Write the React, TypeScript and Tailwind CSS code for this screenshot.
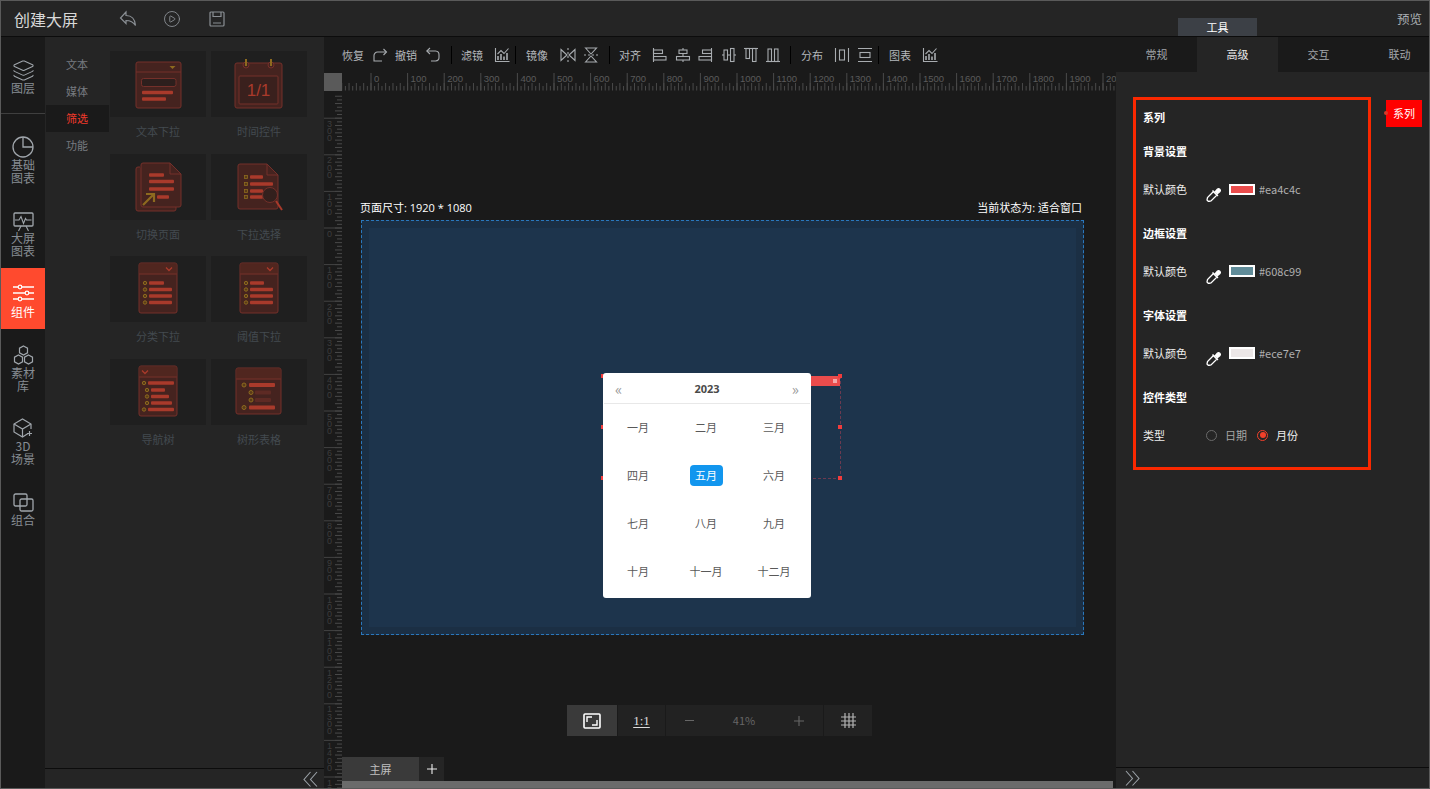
import React from "react";
import { Layers, CirclePlay } from "lucide-react";

const LINE = "#74302a";
const FILL = "#45231f";
const BAR = "#a93a2b";
const DIM = "#5e2a24";
const GOLD = "#8d6a1f";

function Bar({ x1, x2, y, h = 3.4, c = BAR }: { x1: number; x2: number; y: number; h?: number; c?: string }) {
  return <rect x={x1} y={y - h / 2} width={x2 - x1} height={h} rx={1} fill={c} />;
}
function Dot({ x, y, r = 1.7 }: { x: number; y: number; r?: number }) {
  return <circle cx={x} cy={y} r={r} fill="#5a3a18" stroke={GOLD} strokeWidth={1} />;
}
function Chev({ x, y }: { x: number; y: number }) {
  return <path d={`M${x - 3} ${y - 1.5}L${x} ${y + 1.5}L${x + 3} ${y - 1.5}`} fill="none" stroke={BAR} strokeWidth={1.3} />;
}
function Ico({ children }: { children: React.ReactNode }) {
  return (
    <svg width="96" height="66" viewBox="0 0 96 66" className="block">
      {children}
    </svg>
  );
}
function ListBox({ chevX, y1 = 7, y2 = 57, x1 = 29, x2 = 67, head = 18, chevron = true, children }: { chevX: number; y1?: number; y2?: number; x1?: number; x2?: number; head?: number; chevron?: boolean; children: React.ReactNode }) {
  return (
    <Ico>
      <rect x={x1} y={y1} width={x2 - x1} height={y2 - y1} rx={2} fill={FILL} stroke={LINE} strokeWidth={1} />
      <rect x={x1 + 0.5} y={y1 + 0.5} width={x2 - x1 - 1} height={head - y1} fill="#50261f" />
      <line x1={x1} x2={x2} y1={head} y2={head} stroke={LINE} />
      {chevron && <Chev x={chevX} y={(y1 + head) / 2 + 0.5} />}
      {children}
    </Ico>
  );
}

const icons: Record<string, React.ReactNode> = {
  文本下拉: (
    <Ico>
      <rect x="26" y="11" width="45" height="46" rx="2" fill={FILL} stroke={LINE} />
      <line x1="26" x2="71" y1="21" y2="21" stroke={LINE} />
      <path d="M59.5 15h6l-3 3z" fill={GOLD} />
      <rect x="31.5" y="27.5" width="34.5" height="8" rx="2" fill="#2d1f1d" stroke={LINE} />
      <Bar x1={32} x2={63} y={41.5} />
      <Bar x1={32} x2={56} y={48} />
    </Ico>
  ),
  时间控件: (
    <Ico>
      <rect x="24" y="12" width="47" height="45" rx="2" fill={FILL} stroke={LINE} />
      <rect x="28" y="25" width="39" height="28" rx="1" fill="#3a201d" stroke={LINE} />
      <circle cx="35" cy="14" r="3" fill={FILL} stroke={LINE} />
      <circle cx="60" cy="14" r="3" fill={FILL} stroke={LINE} />
      <line x1="35" x2="35" y1="8" y2="15" stroke={GOLD} strokeWidth="2" />
      <line x1="60" x2="60" y1="8" y2="15" stroke={GOLD} strokeWidth="2" />
      <text x="47.5" y="45" fill={BAR} fontSize="17" textAnchor="middle" fontFamily="Liberation Sans, sans-serif">1/1</text>
    </Ico>
  ),
  切换页面: (
    <Ico>
      <path d="M30 13h-2a2 2 0 0 0-2 2v40a2 2 0 0 0 2 2h36a2 2 0 0 0 2-2v-2" fill={FILL} stroke={LINE} />
      <path d="M33 9h27l11 11v31a2 2 0 0 1-2 2H33a2 2 0 0 1-2-2V11a2 2 0 0 1 2-2z" fill={FILL} stroke={LINE} />
      <path d="M60 9v11h11" fill="none" stroke={LINE} />
      <Bar x1={39} x2={54} y={21} />
      <Bar x1={39} x2={64} y={27.5} />
      <Bar x1={39} x2={64} y={35} />
      <Bar x1={47} x2={59} y={43} />
      <path d="M33 51L44 40M36 40h8v8" fill="none" stroke={GOLD} strokeWidth="2.2" />
    </Ico>
  ),
  下拉选择: (
    <Ico>
      <path d="M29 10h27l11 11v32a2 2 0 0 1-2 2H29a2 2 0 0 1-2-2V12a2 2 0 0 1 2-2z" fill={FILL} stroke={LINE} />
      <path d="M56 10v11h11" fill="none" stroke={LINE} />
      {[23, 30, 37, 43].map((y) => (
        <rect key={y} x="33.5" y={y - 1.5} width="3" height="3" fill="#5a3a18" stroke={GOLD} strokeWidth=".8" />
      ))}
      <Bar x1={39} x2={52} y={23} />
      <Bar x1={39} x2={62} y={30} />
      <Bar x1={39} x2={52} y={37} />
      <Bar x1={39} x2={52} y={43} />
      <circle cx="59" cy="41" r="7.5" fill="#33201d" stroke={LINE} />
      <line x1="65" x2="71" y1="47" y2="56" stroke={BAR} strokeWidth="2" />
    </Ico>
  ),
  分类下拉: (
    <ListBox chevX={59}>
      <Dot x={35} y={27} /><Bar x1={39} x2={54} y={27} />
      <Dot x={35} y={33.5} /><Bar x1={39} x2={62} y={33.5} />
      <Dot x={35} y={40} /><Bar x1={39} x2={62} y={40} />
      <Dot x={35} y={46.5} /><Bar x1={39} x2={62} y={46.5} />
    </ListBox>
  ),
  阈值下拉: (
    <ListBox chevX={59}>
      <Dot x={35} y={27} /><Bar x1={39} x2={53} y={27} />
      <Dot x={35} y={33.5} /><Bar x1={39} x2={62} y={33.5} />
      <Dot x={35} y={40} /><Bar x1={39} x2={62} y={40} />
      <Dot x={35} y={46.5} /><Bar x1={39} x2={62} y={46.5} />
    </ListBox>
  ),
  导航树: (
    <ListBox chevX={35} head={18}>
      <Dot x={34} y={24} /><Bar x1={38} x2={64} y={24} />
      <Dot x={37} y={31} /><Bar x1={41} x2={55} y={31} />
      <Dot x={37} y={37.5} /><Bar x1={41} x2={59} y={37.5} />
      <Dot x={37} y={44} /><Bar x1={41} x2={62} y={44} />
      <Dot x={34} y={50.5} /><Bar x1={38} x2={64} y={50.5} />
    </ListBox>
  ),
  树形表格: (
    <ListBox chevX={0} x1={25} x2={70} y1={9} y2={55} head={20} chevron={false}>
      <Dot x={33} y={26} r={2} /><Bar x1={38} x2={64} y={26} h={4} />
      <Dot x={40} y={33.5} r={2} /><Bar x1={44} x2={60} y={33.5} h={4} c={DIM} />
      <Dot x={40} y={41} r={2} /><Bar x1={44} x2={60} y={41} h={4} c={DIM} />
      <Dot x={33} y={48.5} r={2} /><Bar x1={38} x2={64} y={48.5} h={4} />
    </ListBox>
  ),
};

function S({ children, w = 16, h = 16, className = "" }: { children: React.ReactNode; w?: number; h?: number; className?: string }) {
  return (
    <svg width={w} height={h} viewBox={`0 0 ${w} ${h}`} fill="none" stroke="currentColor" strokeWidth="1.1" className={`block shrink-0 ${className}`}>
      {children}
    </svg>
  );
}

const Chart = () => (
  <S>
    <path d="M1.5 1v13.5H15.5" />
    <path d="M4 13V9M7 13V7M10 13V9.5M13 13V6" strokeWidth="1.6" />
    <path d="M3.5 7L7 3.5L10 6.5L14.5 1.5" />
  </S>
);

function Item({ t, ml }: { t: string; ml: string }) {
  return <span className={`text-[11px] leading-[14px] whitespace-nowrap text-[#b4b8bc] ${ml}`}>{t}</span>;
}
const Div = ({ ml }: { ml: string }) => <span className={`w-px h-[18px] bg-black shrink-0 ${ml}`} />;

function Toolbar() {
  return (
    <div className="h-[35px] bg-[#1a1a1a] flex items-center text-[#a8acb0] pl-[18px] shrink-0">
      <Item t="恢复" ml="" />
      <S className="ml-[8px]"><path d="M14 5H5.5a3.5 3.5 0 0 0-3.5 3.5V14h8" /><path d="M11.5 2L14.5 5L11.5 8" /></S>
      <Item t="撤销" ml="ml-[7px]" />
      <S className="ml-[8px]"><path d="M2 4h8.5a3.8 3.8 0 0 1 3.5 4v2a3.8 3.8 0 0 1-3.5 4H6" /><path d="M5 1L1.8 4L5 7" /></S>
      <Div ml="ml-[10px]" />
      <Item t="滤镜" ml="ml-[9px]" />
      <span className="ml-[11px]"><Chart /></span>
      <Div ml="ml-[5px]" />
      <Item t="镜像" ml="ml-[10px]" />
      <S className="ml-[12px]"><path d="M1 2.5L7 8L1 13.5zM15 2.5L9 8L15 13.5z" /><path d="M8 1v14" strokeDasharray="2 2" /></S>
      <S className="ml-[7px]"><path d="M2.5 1L8 7L13.5 1zM2.5 15L8 9L13.5 15z" /><path d="M1 8h14" strokeDasharray="2 2" /></S>
      <Div ml="ml-[10px]" />
      <Item t="对齐" ml="ml-[9px]" />
      <S className="ml-[11px]"><path d="M1.5 1v14" /><rect x="1.5" y="3" width="9" height="3.5" /><rect x="1.5" y="9.5" width="12.5" height="3.5" /></S>
      <S className="ml-[7px]"><path d="M8 1v14" /><rect x="4" y="3" width="8" height="3.5" fill="#1a1a1a" /><rect x="1.5" y="9.5" width="13" height="3.5" fill="#1a1a1a" /></S>
      <S className="ml-[6px]"><path d="M14.5 1v14" /><rect x="5.5" y="3" width="9" height="3.5" /><rect x="2" y="9.5" width="12.5" height="3.5" /></S>
      <S className="ml-[8px]"><path d="M1 8h14" /><rect x="3" y="3" width="3.5" height="10" fill="#1a1a1a" /><rect x="9.5" y="1.5" width="3.5" height="13" fill="#1a1a1a" /></S>
      <S className="ml-[6px]"><path d="M1 1.5h14" /><rect x="3" y="1.5" width="3.5" height="10" /><rect x="9.5" y="1.5" width="3.5" height="13" /></S>
      <S className="ml-[6px]"><path d="M1 14.5h14" /><rect x="3" y="2" width="3.5" height="12.5" /><rect x="9.5" y="2" width="3.5" height="12.5" /></S>
      <Div ml="ml-[9px]" />
      <Item t="分布" ml="ml-[10px]" />
      <S className="ml-[11px]"><path d="M1.5 1v14M14.5 1v14" /><rect x="5.5" y="3" width="5" height="10" /></S>
      <S className="ml-[7px]"><path d="M1 1.5h14M1 14.5h14" /><rect x="3" y="5.5" width="10" height="5" /></S>
      <Div ml="ml-[5px]" />
      <Item t="图表" ml="ml-[10px]" />
      <span className="ml-[11px]"><Chart /></span>
    </div>
  );
}

function HRuler() {
  const w = 774;
  const o = 29;
  const step = 3.66;
  const ticks: React.ReactNode[] = [];
  for (let i = -8; i * step + o < w; i++) {
    const x = o + i * step;
    ticks.push(<line key={i} x1={x} x2={x} y1={i % 2 === 0 ? 11 : 14} y2={18.5} stroke="#4a4a4a" />);
  }
  const labels: React.ReactNode[] = [];
  for (let k = 0; k <= 20; k++) {
    const x = o + k * 36.6;
    labels.push(
      <g key={k}>
        <line x1={x} x2={x} y1={1} y2={18.5} stroke="#4a4a4a" />
        <text x={x + 3} y={10} fontSize="9.5" fill="#5b5b5b" fontFamily="Liberation Sans, sans-serif">{k * 100}</text>
      </g>
    );
  }
  return (
    <svg width={w} height={19} className="block shrink-0">
      {ticks}
      {labels}
    </svg>
  );
}

function VRuler() {
  const h = 698;
  const o = 137; // y of 0 inside the ruler (228 - 91)
  const step = 3.66;
  const ticks: React.ReactNode[] = [];
  for (let i = -36; i * step + o < h; i++) {
    const y = o + i * step;
    ticks.push(<line key={i} x1={i % 2 === 0 ? 11 : 13} x2={18} y1={y} y2={y} stroke="#4a4a4a" />);
  }
  const labels: React.ReactNode[] = [];
  for (let k = -3; k <= 16; k++) {
    const y = o + k * 36.6;
    const digits = String(Math.abs(k) * 100).split("");
    labels.push(
      <g key={k}>
        <line x1={0} x2={18} y1={y} y2={y} stroke="#444" />
        {digits.map((d, i) => (
          <text key={i} x={3} y={y + 8.5 + i * 7.3} fontSize="9" fill="#3d3d3d" fontFamily="Liberation Sans, sans-serif">{d}</text>
        ))}
      </g>
    );
  }
  return (
    <svg width={18} height={h} className="block shrink-0">
      {ticks}
      {labels}
    </svg>
  );
}

function RailItem({ label, icon, box, active = false, textTop = "" }: { label: string[]; icon: React.ReactNode; box: string; active?: boolean; textTop?: string }) {
  return (
    <div className={`flex flex-col items-center shrink-0 ${box} ${active ? "bg-[#ff4a2e] text-white" : "text-[#868c92] [&_svg]:text-[#a0a6ac]"}`}>
      {icon}
      <div className={`text-[12px] leading-[13px] text-center ${textTop}`}>
        {label.map((l) => (
          <div key={l}>{l}</div>
        ))}
      </div>
    </div>
  );
}

function Rail() {
  return (
    <div className="w-[44px] bg-[#1a1a1a] flex flex-col shrink-0">
      <RailItem
        label={["图层"]}
        box="h-[77px] pt-[22px] border-b border-[#3f3f3f]"
        textTop="-mt-px"
        icon={<Layers size={23} strokeWidth={1.1} />}
      />
      <RailItem
        label={["基础", "图表"]}
        box="h-[76px] pt-[22px]"
        icon={
          <S w={22} h={22}>
            <circle cx="11" cy="11" r="10" strokeWidth="1.3" />
            <path d="M11 1v10h10" strokeWidth="1.3" />
          </S>
        }
      />
      <RailItem
        label={["大屏", "图表"]}
        box="h-[78px] pt-[22px]"
        textTop="-mt-px"
        icon={
          <S w={21} h={20}>
            <rect x="1" y="1" width="19" height="13" rx="1" strokeWidth="1.3" />
            <path d="M2 8h4l2-3.5 2.5 7 2-5 1 1.5h5" />
            <path d="M8 14l-2.500 5M13 14l2.500 5" />
          </S>
        }
      />
      <RailItem
        label={["组件"]}
        active
        box="h-[61px] pt-[16px]"
        textTop="mt-[3px]"
        icon={
          <S w={21} h={18}>
            <path d="M0 3h21M0 9h21M0 15h21" strokeWidth="1.3" />
            <circle cx="7" cy="3" r="1.8" fill="#ff4a2e" strokeWidth="1.2" />
            <circle cx="14" cy="9" r="1.8" fill="#ff4a2e" strokeWidth="1.2" />
            <circle cx="7" cy="15" r="1.8" fill="#ff4a2e" strokeWidth="1.2" />
          </S>
        }
      />
      <RailItem
        label={["素材", "库"]}
        box="h-[75px] pt-[16px]"
        textTop="mt-[1px]"
        icon={
          <S w={21} h={20}>
            <path d="M10.5 1l4 2.200v4.600l-4 2.200-4-2.200V3.200z" strokeWidth="1.2" />
            <path d="M5.500 10l4 2.200v4.600l-4 2.200-4-2.200v-4.600z" strokeWidth="1.2" />
            <path d="M15.500 10l4 2.200v4.600l-4 2.200-4-2.200v-4.600z" strokeWidth="1.2" />
          </S>
        }
      />
      <RailItem
        label={["3D", "场景"]}
        box="h-[75px] pt-[14px]"
        textTop="mt-[1px]"
        icon={
          <S w={20} h={20}>
            <path d="M15 15.500L9.500 19 1 14V6l8.500-5L18 6v5" strokeWidth="1.2" />
            <path d="M1 6l8.500 5L18 6M9.500 11v8" strokeWidth="1.2" />
            <path d="M16.500 13v5M14 15.500h5" strokeWidth="1.2" />
          </S>
        }
      />
      <RailItem
        label={["组合"]}
        box="pt-[14px]"
        textTop="mt-[1px]"
        icon={
          <S w={21} h={19}>
            <rect x="1" y="1" width="13" height="12" rx="1.500" strokeWidth="1.3" />
            <rect x="7" y="6" width="13" height="12" rx="1.500" strokeWidth="1.3" />
          </S>
        }
      />
    </div>
  );
}

function LeftPanel() {
  const subs = ["文本", "媒体", "筛选", "功能"];
  const names = Object.keys(icons);
  return (
    <div className="w-[279px] shrink-0 flex flex-col bg-[#252525]">
      <div className="flex flex-1 min-h-0">
        <div className="w-[65px] shrink-0 pt-[14px]">
          {subs.map((s) => (
            <div
              key={s}
              className={`h-[27px] mx-px pl-[20px] flex items-center text-[11px] ${s === "筛选" ? "bg-[#1a1a1a] text-[#f0392b]" : "text-[#777b80]"}`}
            >
              {s}
            </div>
          ))}
        </div>
        <div className="pt-[14px] grid grid-cols-[96px_96px] gap-x-[5px] content-start">
          {names.map((n) => (
            <div key={n} className="flex flex-col items-center">
              <div className="w-[96px] h-[66px] bg-[#1f1f1f]">{icons[n]}</div>
              <div className="pt-[7px] pb-[15.5px] text-[11px] leading-[14px] text-[#434a50]">{n}</div>
            </div>
          ))}
        </div>
      </div>
      <div className="h-[20px] border-t border-[#0c0c0c] flex justify-end items-center pr-[6px] text-[#9aa0a6] shrink-0">
        <S w={15} h={16}><path d="M7.500 1L1 8.500l6.500 7M14 1L7.500 8.500l6.500 7" /></S>
      </div>
    </div>
  );
}

function Handle({ pos }: { pos: string }) {
  return <span className={`absolute w-[4px] h-[4px] bg-[#f23c3c] ${pos}`} />;
}

function Calendar() {
  const months = ["一月", "二月", "三月", "四月", "五月", "六月", "七月", "八月", "九月", "十月", "十一月", "十二月"];
  return (
    <div className="absolute left-[234px] top-[145px] w-[208px] h-[225px] bg-white rounded-[3px] flex flex-col">
      <div className="h-[31px] pt-[2px] mx-px border-b border-[#e8e8e8] flex items-center justify-between px-[11px] text-[#999] text-[15px]">
        <span>«</span>
        <span className="text-[11px] font-bold text-[#4a4a4a] font-['Open_Sans',sans-serif]">2023</span>
        <span>»</span>
      </div>
      <div className="grid grid-cols-[68px_68px_68px] auto-rows-[48px] pl-px -mt-px">
        {months.map((m) => (
          <div key={m} className="flex items-center justify-center text-[11px] text-[#595959]">
            {m === "五月" ? (
              <span className="w-[33px] h-[21px] rounded-[4px] bg-[#1296ee] text-white flex items-center justify-center">{m}</span>
            ) : (
              m
            )}
          </div>
        ))}
      </div>
    </div>
  );
}

function Center() {
  return (
    <div className="w-[792px] shrink-0 flex flex-col bg-[#1a1a1a]">
      <Toolbar />
      <div className="h-[19px] flex shrink-0">
        <div className="w-[18px] h-[18px] mt-px bg-[#5a5a5a] shrink-0" />
        <HRuler />
      </div>
      <div className="flex flex-1 min-h-0 overflow-hidden">
        <VRuler />
        <div className="flex-1 flex flex-col min-w-0">
          <div className="pl-[19px] pt-[110px] w-[742px]">
            <div className="h-[19px] flex justify-between text-[11px] leading-[14px] text-white pr-[2px] font-['Open_Sans','Noto_Sans_CJK_SC',sans-serif]">
              <span className="-ml-px">页面尺寸: 1920 * 1080</span>
              <span>当前状态为: 适合窗口</span>
            </div>
            <div className="w-[723px] h-[415px] border border-dashed border-[#2a78bd] bg-[#1b2f44] p-[7px] flex">
              <div className="flex-1 bg-[#1d344c] relative">
                <div className="absolute left-[234px] top-[148px] w-[238px] h-[103px] border-r border-b border-dashed border-[#6d3a50]">
                  <div className="h-[10px] bg-[#ea4c4c] flex justify-end items-center pr-[3px]">
                    <span className="w-[4px] h-[4px] bg-[#f3a9a9]" />
                  </div>
                  <Handle pos="-left-[2px] -top-[2px]" />
                  <Handle pos="-right-[2px] -top-[2px]" />
                  <Handle pos="-left-[2px] top-[49px]" />
                  <Handle pos="-right-[2px] top-[49px]" />
                  <Handle pos="-left-[2px] -bottom-[2px]" />
                  <Handle pos="-right-[2px] -bottom-[2px]" />
                </div>
                <Calendar />
              </div>
            </div>
          </div>
          <div className="mt-[70px] ml-[225px] h-[31px] flex gap-px text-[#666] shrink-0">
            <div className="w-[50px] bg-[#3a3a3a] flex items-center justify-center text-white">
              <S w={18} h={16}>
                <rect x="1" y="1" width="16" height="14" rx="1" strokeWidth="1.6" />
                <path d="M4 9V4h5M14 7v5H9" strokeWidth="1.4" />
              </S>
            </div>
            <div className="w-[47px] bg-[#222] flex items-center justify-center text-[13px] text-[#ddd] underline underline-offset-2 font-['Liberation_Serif',serif]">1:1</div>
            <div className="w-[157px] bg-[#222] flex items-center justify-between px-[19px] text-[11px]">
              <span className="w-[9px] h-px bg-[#666]" />
              <span>41%</span>
              <S w={10} h={10}><path d="M5 0v10M0 5h10" /></S>
            </div>
            <div className="w-[48px] bg-[#222] flex items-center justify-center text-[#b5b5b5]">
              <S w={15} h={15}>
                <path d="M4 0v15M8 0v15M12 0v15M0 4h15M0 8h15M0 12h15" strokeWidth="1.2" />
              </S>
            </div>
          </div>
          <div className="mt-[21px] h-[24px] flex shrink-0">
            <div className="w-[77px] bg-[#3a3a3a] flex items-center justify-center text-[11px] text-[#c0c0c0]">主屏</div>
            <div className="w-[25px] bg-[#252525] flex items-center justify-center text-[#eee]">
              <S w={10} h={10}><path d="M5 0v10M0 5h10" /></S>
            </div>
          </div>
          <div className="h-[7px] w-[771px] bg-[#6b6b6b] shrink-0" />
        </div>
      </div>
    </div>
  );
}

function Head({ t, mt }: { t: string; mt: string }) {
  return <div className={`h-[16px] leading-[16px] text-[11px] font-bold text-white ${mt}`}>{t}</div>;
}

function Dropper() {
  return (
    <S w={15} h={15} className="text-white mt-[10px]">
      <path d="M2.500 14.500L1 13l.500-2.500L7.500 4.500l3.500 3.500-6 6z" strokeWidth="1.3" />
      <path d="M6.500 3.500l5.500 5.500" strokeWidth="1.3" />
      <path d="M9 5l2.500-3a1.800 1.800 0 0 1 2.500 2.500L11 7" strokeWidth="1.3" fill="#fff" />
    </S>
  );
}

function ColorRow({ mt, color, hex, swatchH }: { mt: string; color: string; hex: string; swatchH: string }) {
  return (
    <div className={`h-[16px] flex items-center text-[11px] ${mt}`}>
      <span className="w-[63px] text-[#eee] shrink-0">默认颜色</span>
      <Dropper />
      <span className={`w-[26px] border-2 border-white ml-[8px] ${swatchH} ${color}`} />
      <span className="ml-[4px] text-[#b0b0b0]">{hex}</span>
    </div>
  );
}

function RightPanel() {
  const tabs = ["常规", "高级", "交互", "联动"];
  return (
    <div className="w-[313px] shrink-0 bg-[#252525] flex flex-col overflow-hidden">
      <div className="h-[35px] bg-[#1a1a1a] flex shrink-0">
        {tabs.map((t) => (
          <div
            key={t}
            className={`w-[81px] shrink-0 flex items-center justify-center text-[11px] ${t === "高级" ? "bg-[#252525] text-[#e8e8e8]" : "text-[#a3a7ab]"}`}
          >
            {t}
          </div>
        ))}
      </div>
      <div className="flex-1 min-h-0 flex items-start pl-[17px] pt-[25px] relative">
        <div className="w-[238px] h-[373px] border-[3px] border-[#fa2800] pl-[7px] pt-[9px] shrink-0">
          <Head t="系列" mt="" />
          <Head t="背景设置" mt="mt-[18px]" />
          <ColorRow mt="mt-[22px]" color="bg-[#ea4c4c]" hex="#ea4c4c" swatchH="h-[11px]" />
          <Head t="边框设置" mt="mt-[28px]" />
          <ColorRow mt="mt-[22px]" color="bg-[#608c99]" hex="#608c99" swatchH="h-[12px]" />
          <Head t="字体设置" mt="mt-[28px]" />
          <ColorRow mt="mt-[22px]" color="bg-[#ece7e7]" hex="#ece7e7" swatchH="h-[12px]" />
          <Head t="控件类型" mt="mt-[28px]" />
          <div className="h-[16px] mt-[22px] flex items-center text-[11px]">
            <span className="w-[63px] text-[#eee] shrink-0">类型</span>
            <span className="w-[11px] h-[11px] rounded-full border border-[#6a6a6a] shrink-0" />
            <span className="ml-[8px] text-[#a6a6a6]">日期</span>
            <span className="ml-[10px] w-[11px] h-[11px] rounded-full border border-[#f2402a] flex items-center justify-center shrink-0">
              <span className="w-[6px] h-[6px] rounded-full bg-[#f2402a]" />
            </span>
            <span className="ml-[8px] text-[#eee]">月份</span>
          </div>
        </div>
        <div className="absolute left-[270px] top-[28px] w-[36px] h-[27px] bg-[#ff0000] text-white text-[11px] flex items-center justify-center">
          系列
          <span className="absolute -left-[2px] top-[11px] w-[4px] h-[4px] rounded-full bg-[#d83a2a]" />
        </div>
      </div>
      <div className="h-[21px] border-t border-[#0c0c0c] flex items-center pl-[9px] text-[#9aa0a6] shrink-0">
        <S w={15} h={16}><path d="M1 1l6.500 7.500L1 15.500M7.500 1L14 8.500l-6.500 7" /></S>
      </div>
    </div>
  );
}

export default function App() {
  return (
    <div className="w-[1430px] h-[789px] overflow-hidden border border-[#5a5a5a] bg-[#252525] flex flex-col font-['Noto_Sans_CJK_SC','Liberation_Sans',sans-serif]">
      <div className="h-[36px] shrink-0 border-b border-[#0c0c0c] flex items-center pl-[13px] bg-[#252525] text-[#8a8f94] relative">
        <span className="text-[16px] text-[#d8d8d8]">创建大屏</span>
        <S w={18} h={17} className="ml-[41px]"><path d="M7 2L1.500 8l5.500 5.500V10.500c4 0 7 1 9.500 5C16 9 12.500 5.500 7 5.500z" strokeWidth="1.2" /></S>
        <CirclePlay size={18} strokeWidth={1.2} className="ml-[26px]" />
        <S w={16} h={16} className="ml-[28px]">
          <rect x="1" y="1" width="14" height="14" rx="1" strokeWidth="1.2" />
          <path d="M4 1v4.500h8V1M4 12h8" strokeWidth="1.2" />
        </S>
        <span className="absolute right-[7px] top-[9px] text-[12.5px] leading-[18px] text-[#a9adb1]">预览</span>
        <span className="absolute left-[1177px] top-[17px] w-[79px] h-[18px] bg-[#3c4046] text-[11px] text-white flex items-center justify-center">工具</span>
      </div>
      <div className="flex flex-1 min-h-0">
        <Rail />
        <LeftPanel />
        <Center />
        <RightPanel />
      </div>
    </div>
  );
}
